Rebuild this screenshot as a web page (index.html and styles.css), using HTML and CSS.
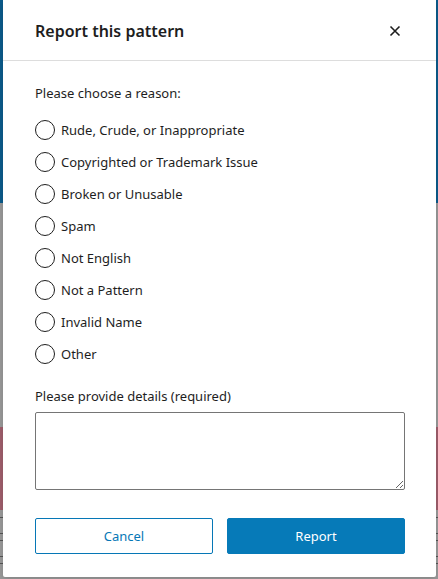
FILE: index.html
```html
<!DOCTYPE html>
<html lang="en">
<head>
<meta charset="utf-8">
<title>Report this pattern</title>
<link rel="stylesheet" href="styles.css">
</head>
<body>
<div class="page">
  <div class="page-hero"></div>
  <div class="page-main"></div>
  <div class="page-banner"></div>
  <div class="page-list">
    <div class="line"></div>
    <div class="line gap1"></div>
    <div class="line gap2"></div>
    <div class="line gap3"></div>
    <div class="line gap4"></div>
  </div>
</div>

<div class="modal" role="dialog" aria-labelledby="modal-title">
  <div class="modal-header">
    <h1 id="modal-title" class="modal-title">Report this pattern</h1>
    <button class="close-btn" aria-label="Close">
      <svg width="24" height="24" viewBox="0 0 24 24"><path d="M7.5 7.5l9 9M16.5 7.5l-9 9" stroke="#1e1e1e" stroke-width="1.6" fill="none"/></svg>
    </button>
  </div>
  <form class="modal-body">
    <p class="field-label">Please choose a reason:</p>
    <div class="options">
      <label class="option"><span class="radio"></span>Rude, Crude, or Inappropriate</label>
      <label class="option"><span class="radio"></span>Copyrighted or Trademark Issue</label>
      <label class="option"><span class="radio"></span>Broken or Unusable</label>
      <label class="option"><span class="radio"></span>Spam</label>
      <label class="option"><span class="radio"></span>Not English</label>
      <label class="option"><span class="radio"></span>Not a Pattern</label>
      <label class="option"><span class="radio"></span>Invalid Name</label>
      <label class="option"><span class="radio"></span>Other</label>
    </div>
    <label class="field-label details-label" for="details">Please provide details (required)</label>
    <textarea id="details" class="details"></textarea>
    <div class="actions">
      <button type="button" class="btn btn-secondary">Cancel</button>
      <button type="button" class="btn btn-primary">Report</button>
    </div>
  </form>
</div>
</body>
</html>
```
FILE: styles.css
```css
html, body {
  margin: 0;
  padding: 0;
}
body {
  width: 438px;
  height: 579px;
  overflow: hidden;
  position: relative;
  font-family: "Noto Sans", "Open Sans", sans-serif;
  color: #1e1e1e;
  background: #999999;
}
.page {
  display: flex;
  flex-direction: column;
  height: 579px;
}
.page-hero {
  height: 203px;
  background: #0b5b8b;
}
.page-main {
  height: 224px;
  background: #999999;
}
.page-banner {
  height: 83px;
  background: #9f5e6c;
}
.page-list {
  flex: 1;
  background: #9a9a9a;
  display: flex;
  flex-direction: column;
  padding-top: 7px;
}
.line {
  height: 1px;
  background: #555;
}
.gap1 { margin-top: 15px; }
.gap2 { margin-top: 6px; }
.gap3 { margin-top: 15px; }
.gap4 { margin-top: 6px; }

.modal {
  position: absolute;
  left: 3px;
  top: 0;
  width: 433px;
  height: 577px;
  background: #fff;
  border-radius: 0 0 2px 2px;
  box-shadow: 0 2px 6px rgba(0,0,0,0.15);
  display: flex;
  flex-direction: column;
}
.modal-header {
  height: 60px;
  border-bottom: 1px solid #dddddd;
  display: flex;
  align-items: center;
  justify-content: space-between;
  padding: 0 29px 0 32px;
  flex-shrink: 0;
}
.modal-title {
  margin: 0;
  font-size: 16px;
  font-weight: 600;
  line-height: 24px;
  color: #1e1e1e;
  padding-top: 1px;
}
.close-btn {
  width: 24px;
  height: 24px;
  padding: 0;
  border: 0;
  background: none;
  display: flex;
  align-items: center;
  justify-content: center;
  margin-top: 2px;
}
.modal-body {
  padding: 22px 31px 0 32px;
  display: flex;
  flex-direction: column;
  font-size: 13px;
}
.field-label {
  margin: 0;
  font-size: 13px;
  line-height: 20px;
  display: block;
}
.options {
  display: flex;
  flex-direction: column;
  margin-top: 17px;
  gap: 12px;
}
.option {
  display: flex;
  align-items: center;
  height: 20px;
  font-size: 13px;
  line-height: 20px;
}
.radio {
  width: 20px;
  height: 20px;
  box-sizing: border-box;
  border: 1.5px solid #1e1e1e;
  border-radius: 50%;
  background: #fff;
  margin-right: 6px;
  flex-shrink: 0;
}
.details-label {
  margin-top: 22px;
}
.details {
  margin-top: 6px;
  width: 370px;
  height: 78px;
  box-sizing: border-box;
  border: 1px solid #757575;
  border-radius: 2px;
  resize: vertical;
  font-family: inherit;
  padding: 6px 8px;
}
.actions {
  display: flex;
  gap: 14px;
  margin-top: 28px;
}
.btn {
  flex: 1;
  height: 36px;
  box-sizing: border-box;
  border-radius: 2px;
  font-family: inherit;
  font-size: 13px;
  line-height: 18px;
  padding-bottom: 2px;
  cursor: pointer;
}
.btn-secondary {
  background: #fff;
  color: #0677b6;
  border: 1px solid #0677b6;
}
.btn-primary {
  background: #067ab8;
  color: #fff;
  border: 1px solid #067ab8;
}
```
